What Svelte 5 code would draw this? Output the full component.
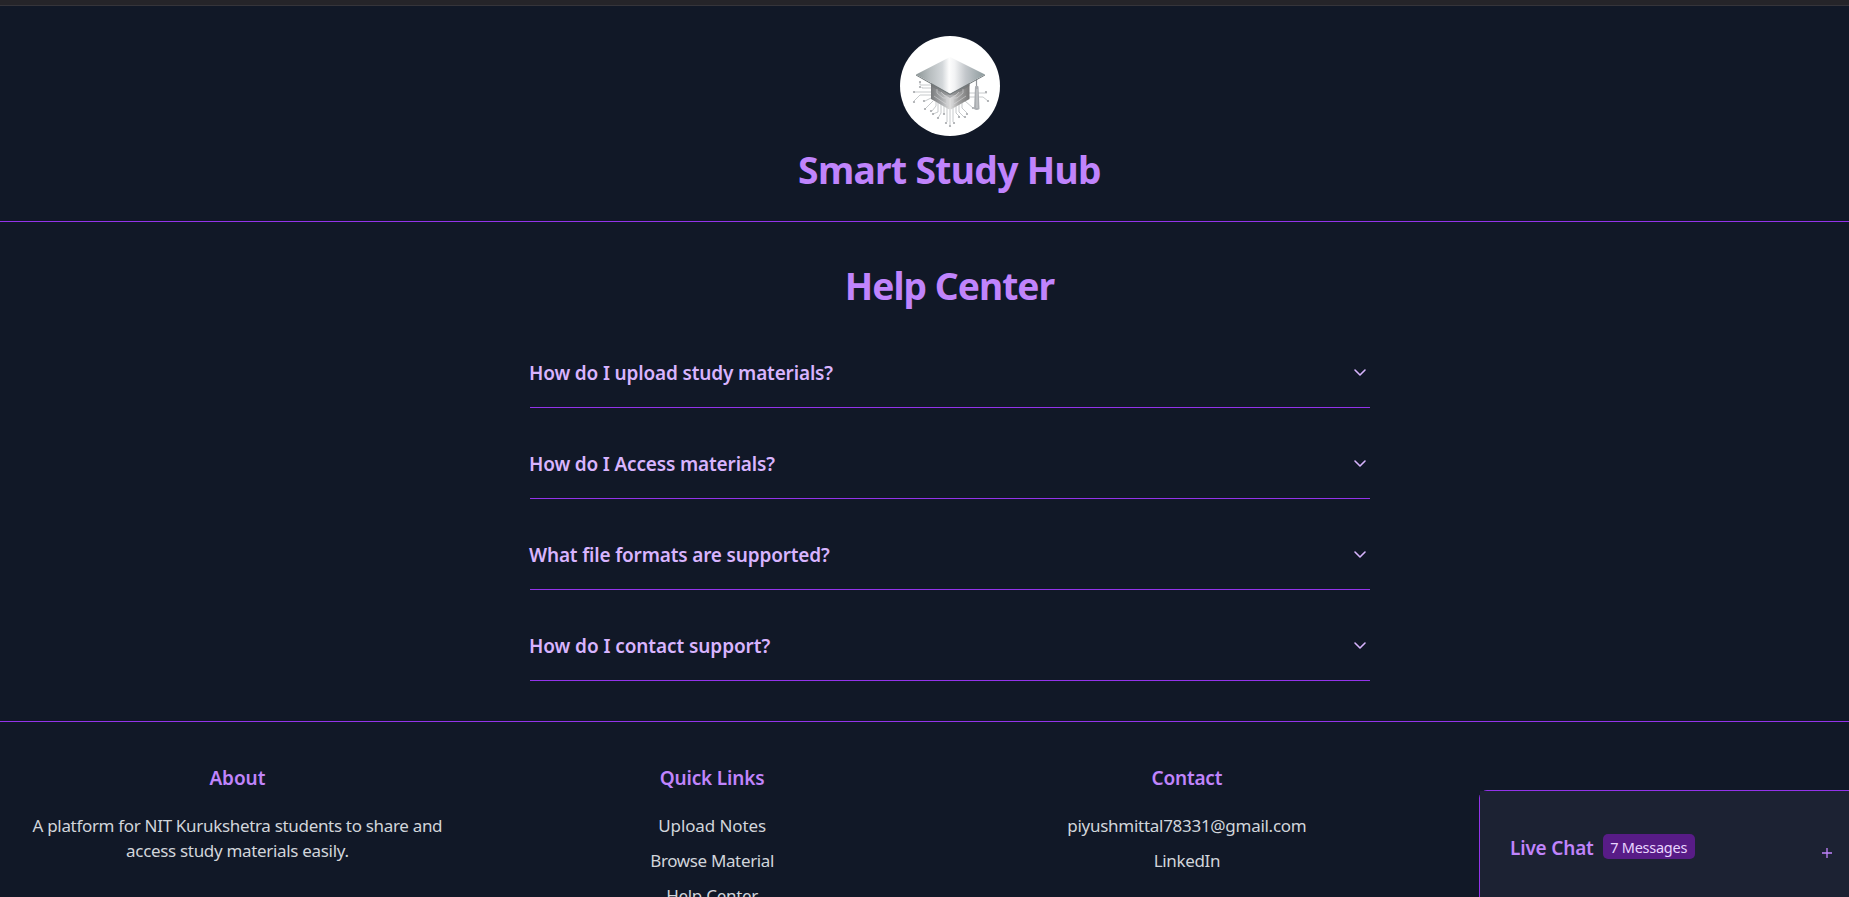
<script>
  const questions = [
    { text: 'How do I upload study materials?', spacing: -0.155 },
    { text: 'How do I Access materials?', spacing: -0.16 },
    { text: 'What file formats are supported?', spacing: -0.17 },
    { text: 'How do I contact support?', spacing: -0.08 }
  ];

  // Circuit traces under the cap, each ending in a small node.
  const traces = [
    ['M31 49H20V46', 20, 46],
    ['M31 52H22V51', 20, 51],
    ['M31 56H14', 14, 56],
    ['M31 59H20L14 65', 14, 66],
    ['M31 62L25 65', 24, 65],
    ['M33 65L25 73', 25, 73],
    ['M36 66V70L32 75', 31, 75],
    ['M38 67V76L33 78', 33, 78],
    ['M41 68V77L38 82', 38, 82],
    ['M44 70V78', 44, 78],
    ['M47 72V86', 46, 87],
    ['M50 74V89', 50, 90],
    ['M53 72V86', 54, 87],
    ['M56 70V77L60 81', 59, 81],
    ['M59 68V76L64 81', 65, 81],
    ['M62 67V72L67 77', 67, 78],
    ['M65 65L73 72', 73, 72],
    ['M69 57H87', 86, 56],
    ['M69 61H83L88 65', 88, 65]
  ];
</script>

<div class="strip"></div>
<div class="page">
  <header>
    <svg class="logo" viewBox="0 0 100 100" width="100" height="100" aria-hidden="true">
      <defs>
        <linearGradient id="board" x1="0" x2="1" y1="0" y2="0">
          <stop offset="0" stop-color="#8d9697" />
          <stop offset=".2" stop-color="#b7bdbf" />
          <stop offset=".38" stop-color="#d3d7da" />
          <stop offset=".48" stop-color="#fdfdfd" />
          <stop offset=".56" stop-color="#f2f3f4" />
          <stop offset=".72" stop-color="#c3c7cb" />
          <stop offset="1" stop-color="#8b999b" />
        </linearGradient>
        <linearGradient id="base" x1="0" x2="1" y1="0" y2="0">
          <stop offset="0" stop-color="#77797b" />
          <stop offset=".28" stop-color="#a9abad" />
          <stop offset=".5" stop-color="#dedede" />
          <stop offset=".72" stop-color="#a2a2a2" />
          <stop offset="1" stop-color="#777" />
        </linearGradient>
      </defs>
      <circle cx="50" cy="50" r="50" fill="#fff" />
      <g fill="none" stroke="#b9bcbf" stroke-width=".8">
        {#each traces as [d]}<path {d} />{/each}
      </g>
      <g fill="#a5a8ab">
        {#each traces as [, cx, cy]}<circle {cx} {cy} r="1.1" />{/each}
      </g>
      <path d="M31 46L50 56L69.500 46V63L50 74L31 63Z" fill="url(#base)" />
      <path d="M31 47L50 58L69.500 47V50L50 62L31 50Z" fill="#6d6f71" opacity=".55" />
      <g fill="none" stroke="#e0e1e2" stroke-width=".7" opacity=".75">
        <path d="M37 53V57L43 62H57L63 57V53M41 56L45 60H55L59 56M34 60L46 68M66 60L54 68M47 63V70M53 63V70" />
      </g>
      <path d="M76.500 43V51" stroke="#92959a" stroke-width="1.200" />
      <path d="M75 50.500Q76.700 49 78.500 50.500L79.500 73Q76.700 75 74 73Z" fill="#aaadb1" />
      <path d="M77 53V72" stroke="#d9dadc" stroke-width=".8" />
      <path d="M16 38.500L50 57.500L85 38.500V39.500L50 59L16 39.500Z" fill="#72797b" />
      <path d="M16 38.500L50 21L85 38.500L50 57.500Z" fill="url(#board)" />
    </svg>
    <h1 class="brand">Smart Study Hub</h1>
  </header>

  <main>
    <h1 class="title">Help Center</h1>
    <div class="faq">
      {#each questions as q}
        <button>
          <span style:letter-spacing="{q.spacing}px">{q.text}</span>
          <svg viewBox="0 0 20 20" width="20" height="20" fill="none" aria-hidden="true">
            <path d="M5 7L10 12L15 7" stroke="#d8b4fe" stroke-width="1.600" stroke-linecap="round" stroke-linejoin="round" />
          </svg>
        </button>
      {/each}
    </div>
  </main>

  <footer>
    <section>
      <h2 class="about">About</h2>
      <p>A platform for NIT Kurukshetra students to share and access study materials easily.</p>
    </section>
    <section>
      <h2>Quick Links</h2>
      <ul>
        <li class="wide">Upload Notes</li>
        <li class="tight">Browse Material</li>
        <li>Help Center</li>
      </ul>
    </section>
    <section>
      <h2>Contact</h2>
      <ul>
        <li>piyushmittal78331@gmail.com</li>
        <li class="tight">LinkedIn</li>
      </ul>
    </section>
  </footer>
</div>

<aside class="chat">
  <div class="panel">
    <h2>Live Chat</h2>
    <span class="badge">7 Messages</span>
    <svg class="plus" viewBox="0 0 10 10" width="10" height="10" aria-hidden="true">
      <path d="M5 0V10M0 5H10" stroke="#c084fc" stroke-width="1.300" />
    </svg>
  </div>
</aside>

<style>
  :global(body) {
    height: 897px;
    overflow: hidden;
    background: #111827;
    font-family: "Segoe UI", "Noto Sans", sans-serif;
  }
  h1, h2, p, ul { margin: 0; padding: 0; }
  .strip {
    box-sizing: border-box;
    height: 6px;
    background: #252429;
    border-bottom: 1px solid #35343a;
  }
  .page { width: 1899px; }
  header {
    box-sizing: border-box;
    height: 216px;
    padding-top: 30px;
    display: flex;
    flex-direction: column;
    align-items: center;
    border-bottom: 1px solid #9333ea;
  }
  .logo { display: block; margin-left: 1px; }
  h1 {
    color: #c084fc;
    font-size: 37.2px;
    font-weight: 700;
    line-height: 40px;
    text-align: center;
  }
  .brand { margin-top: 14px; letter-spacing: -.66px; }
  .title { letter-spacing: -.97px; }
  main {
    box-sizing: border-box;
    height: 499px;
    padding-top: 44px;
  }
  .faq { width: 840px; margin: 11px 0 0 530px; }
  button {
    box-sizing: border-box;
    width: 100%;
    height: 91px;
    padding: 42px 0 20px;
    display: flex;
    align-items: center;
    justify-content: space-between;
    background: none;
    border: 0;
    border-bottom: 1px solid #9333ea;
    color: #d8b4fe;
    font: 600 19px/28px "Segoe UI", "Noto Sans", sans-serif;
  }
  button span { margin-left: -1px; }
  footer {
    display: grid;
    grid-template-columns: repeat(4, 1fr);
    border-top: 1px solid #9333ea;
    padding-top: 42px;
    text-align: center;
  }
  section { padding: 0 24px; }
  h2 {
    color: #c084fc;
    font-size: 19px;
    font-weight: 600;
    line-height: 28px;
    letter-spacing: -.18px;
  }
  .about { letter-spacing: -.05px; }
  p, ul {
    margin-top: 21px;
    color: #d1d5db;
    font-size: 17px;
    line-height: 25px;
    letter-spacing: -.32px;
  }
  ul {
    list-style: none;
    display: grid;
    gap: 10px;
    letter-spacing: -.28px;
  }
  .wide { letter-spacing: -.1px; }
  .tight { letter-spacing: -.36px; }
  .chat {
    position: fixed;
    left: 1479px;
    top: 790px;
    width: 420px;
    height: 130px;
    border: 1px solid #9333ea;
    border-radius: 8px;
  }
  .panel {
    box-sizing: border-box;
    width: 369px;
    height: 130px;
    padding: 43px 17px 0 30px;
    display: flex;
    align-items: flex-start;
    background: #1c2233;
  }
  .badge {
    box-sizing: border-box;
    width: 92px;
    height: 25px;
    margin-left: 9px;
    border-radius: 5px;
    background: #581c87;
    color: #e9d5ff;
    font-size: 14.5px;
    line-height: 26px;
    letter-spacing: -.25px;
    text-align: center;
  }
  .plus { margin: 14px 0 0 auto; }
</style>
